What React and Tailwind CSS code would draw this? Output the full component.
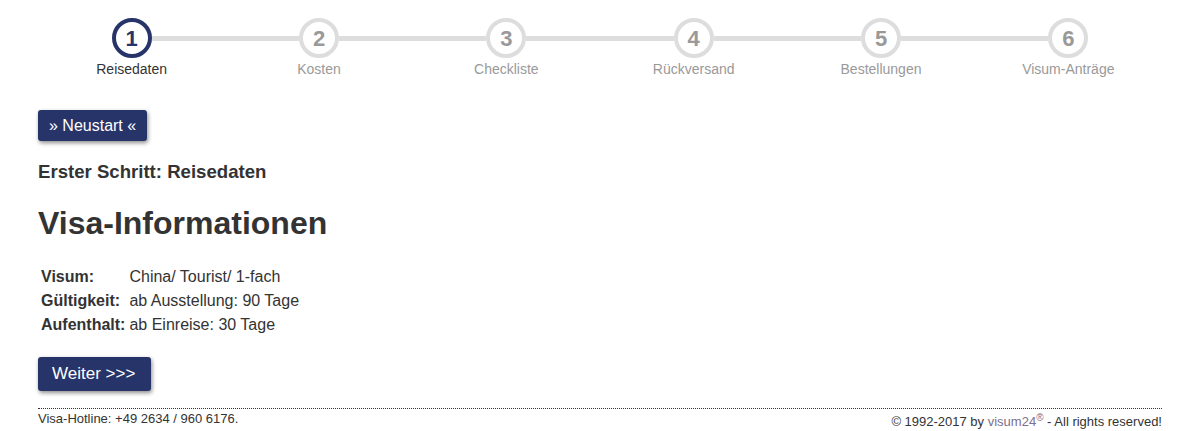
import React from "react";

const steps = ["Reisedaten", "Kosten", "Checkliste", "Rückversand", "Bestellungen", "Visum-Anträge"];

const Stepper = () => (
  <div className="grid grid-cols-6 pt-[18px]">
    {steps.map((label, i) => {
      const active = i === 0;
      return (
        <div key={label} className="flex flex-col items-center">
          <div className="flex w-full items-center">
            <div className={i === 0 ? "h-[5px] flex-1" : "h-[5px] flex-1 bg-[#dddddd]"} />
            <div
              className={
                active
                  ? "flex h-[40px] w-[40px] items-center justify-center rounded-full border-[4px] border-[#273469] bg-white text-[22px] font-bold text-[#273469]"
                  : "flex h-[40px] w-[40px] items-center justify-center rounded-full border-[4px] border-[#dddddd] bg-white text-[22px] font-bold text-[#999999]"
              }
            >
              {i + 1}
            </div>
            <div className={i === steps.length - 1 ? "h-[5px] flex-1" : "h-[5px] flex-1 bg-[#dddddd]"} />
          </div>
          <div className={active ? "mt-[1px] text-[14px] leading-[20px] text-[#333333]" : "mt-[1px] text-[14px] leading-[20px] text-[#999999]"}>
            {label}
          </div>
        </div>
      );
    })}
  </div>
);

const rows = [
  ["Visum:", "China/ Tourist/ 1-fach"],
  ["Gültigkeit:", "ab Ausstellung: 90 Tage"],
  ["Aufenthalt:", "ab Einreise: 30 Tage"],
];

export default function App() {
  return (
    <div className="min-h-screen bg-white font-['Liberation_Sans',Arial,sans-serif] text-[#333333]">
      <div className="ml-[38px] w-[1124px]">
        <Stepper />

        {/* Neustart */}
        <button className="mt-[31px] h-[31px] rounded-[3px] bg-[#273469] px-[11px] text-[16px] text-white shadow-[1px_2px_4px_rgba(0,0,0,0.45)]">
          » Neustart «
        </button>

        <h3 className="mt-[18px] text-[18.6px] font-bold leading-[26px]">Erster Schritt: Reisedaten</h3>

        <h2 className="mt-[20px] text-[32px] font-bold leading-[37px]">Visa-Informationen</h2>

        <div className="mt-[23px] grid grid-cols-[auto_1fr] text-[16px] leading-[24px]">
          {rows.map(([k, v]) => (
            <React.Fragment key={k}>
              <div className="pl-[3px] pr-[4px] font-bold">{k}</div>
              <div className="text-[#333333]">{v}</div>
            </React.Fragment>
          ))}
        </div>

        {/* Weiter */}
        <button className="mt-[20px] h-[34px] w-[113px] rounded-[3px] bg-[#273469] pl-[14px] text-left text-[17px] text-white shadow-[1px_2px_4px_rgba(0,0,0,0.45)]">
          Weiter &gt;&gt;&gt;
        </button>

        {/* Footer */}
        <div className="mt-[17px] border-t border-dotted border-[#333333] pt-[2px]">
          <div className="flex justify-between text-[13px] leading-[15px] text-[#333333]">
            <span>Visa-Hotline: +49 2634 / 960 6176.</span>
            <span className="mt-[3px]">
              © 1992-2017 by <span className="text-[#7d6f8c]">visum24<sup className="text-[10px]">®</sup></span> - All rights reserved!
            </span>
          </div>
        </div>
      </div>
    </div>
  );
}
